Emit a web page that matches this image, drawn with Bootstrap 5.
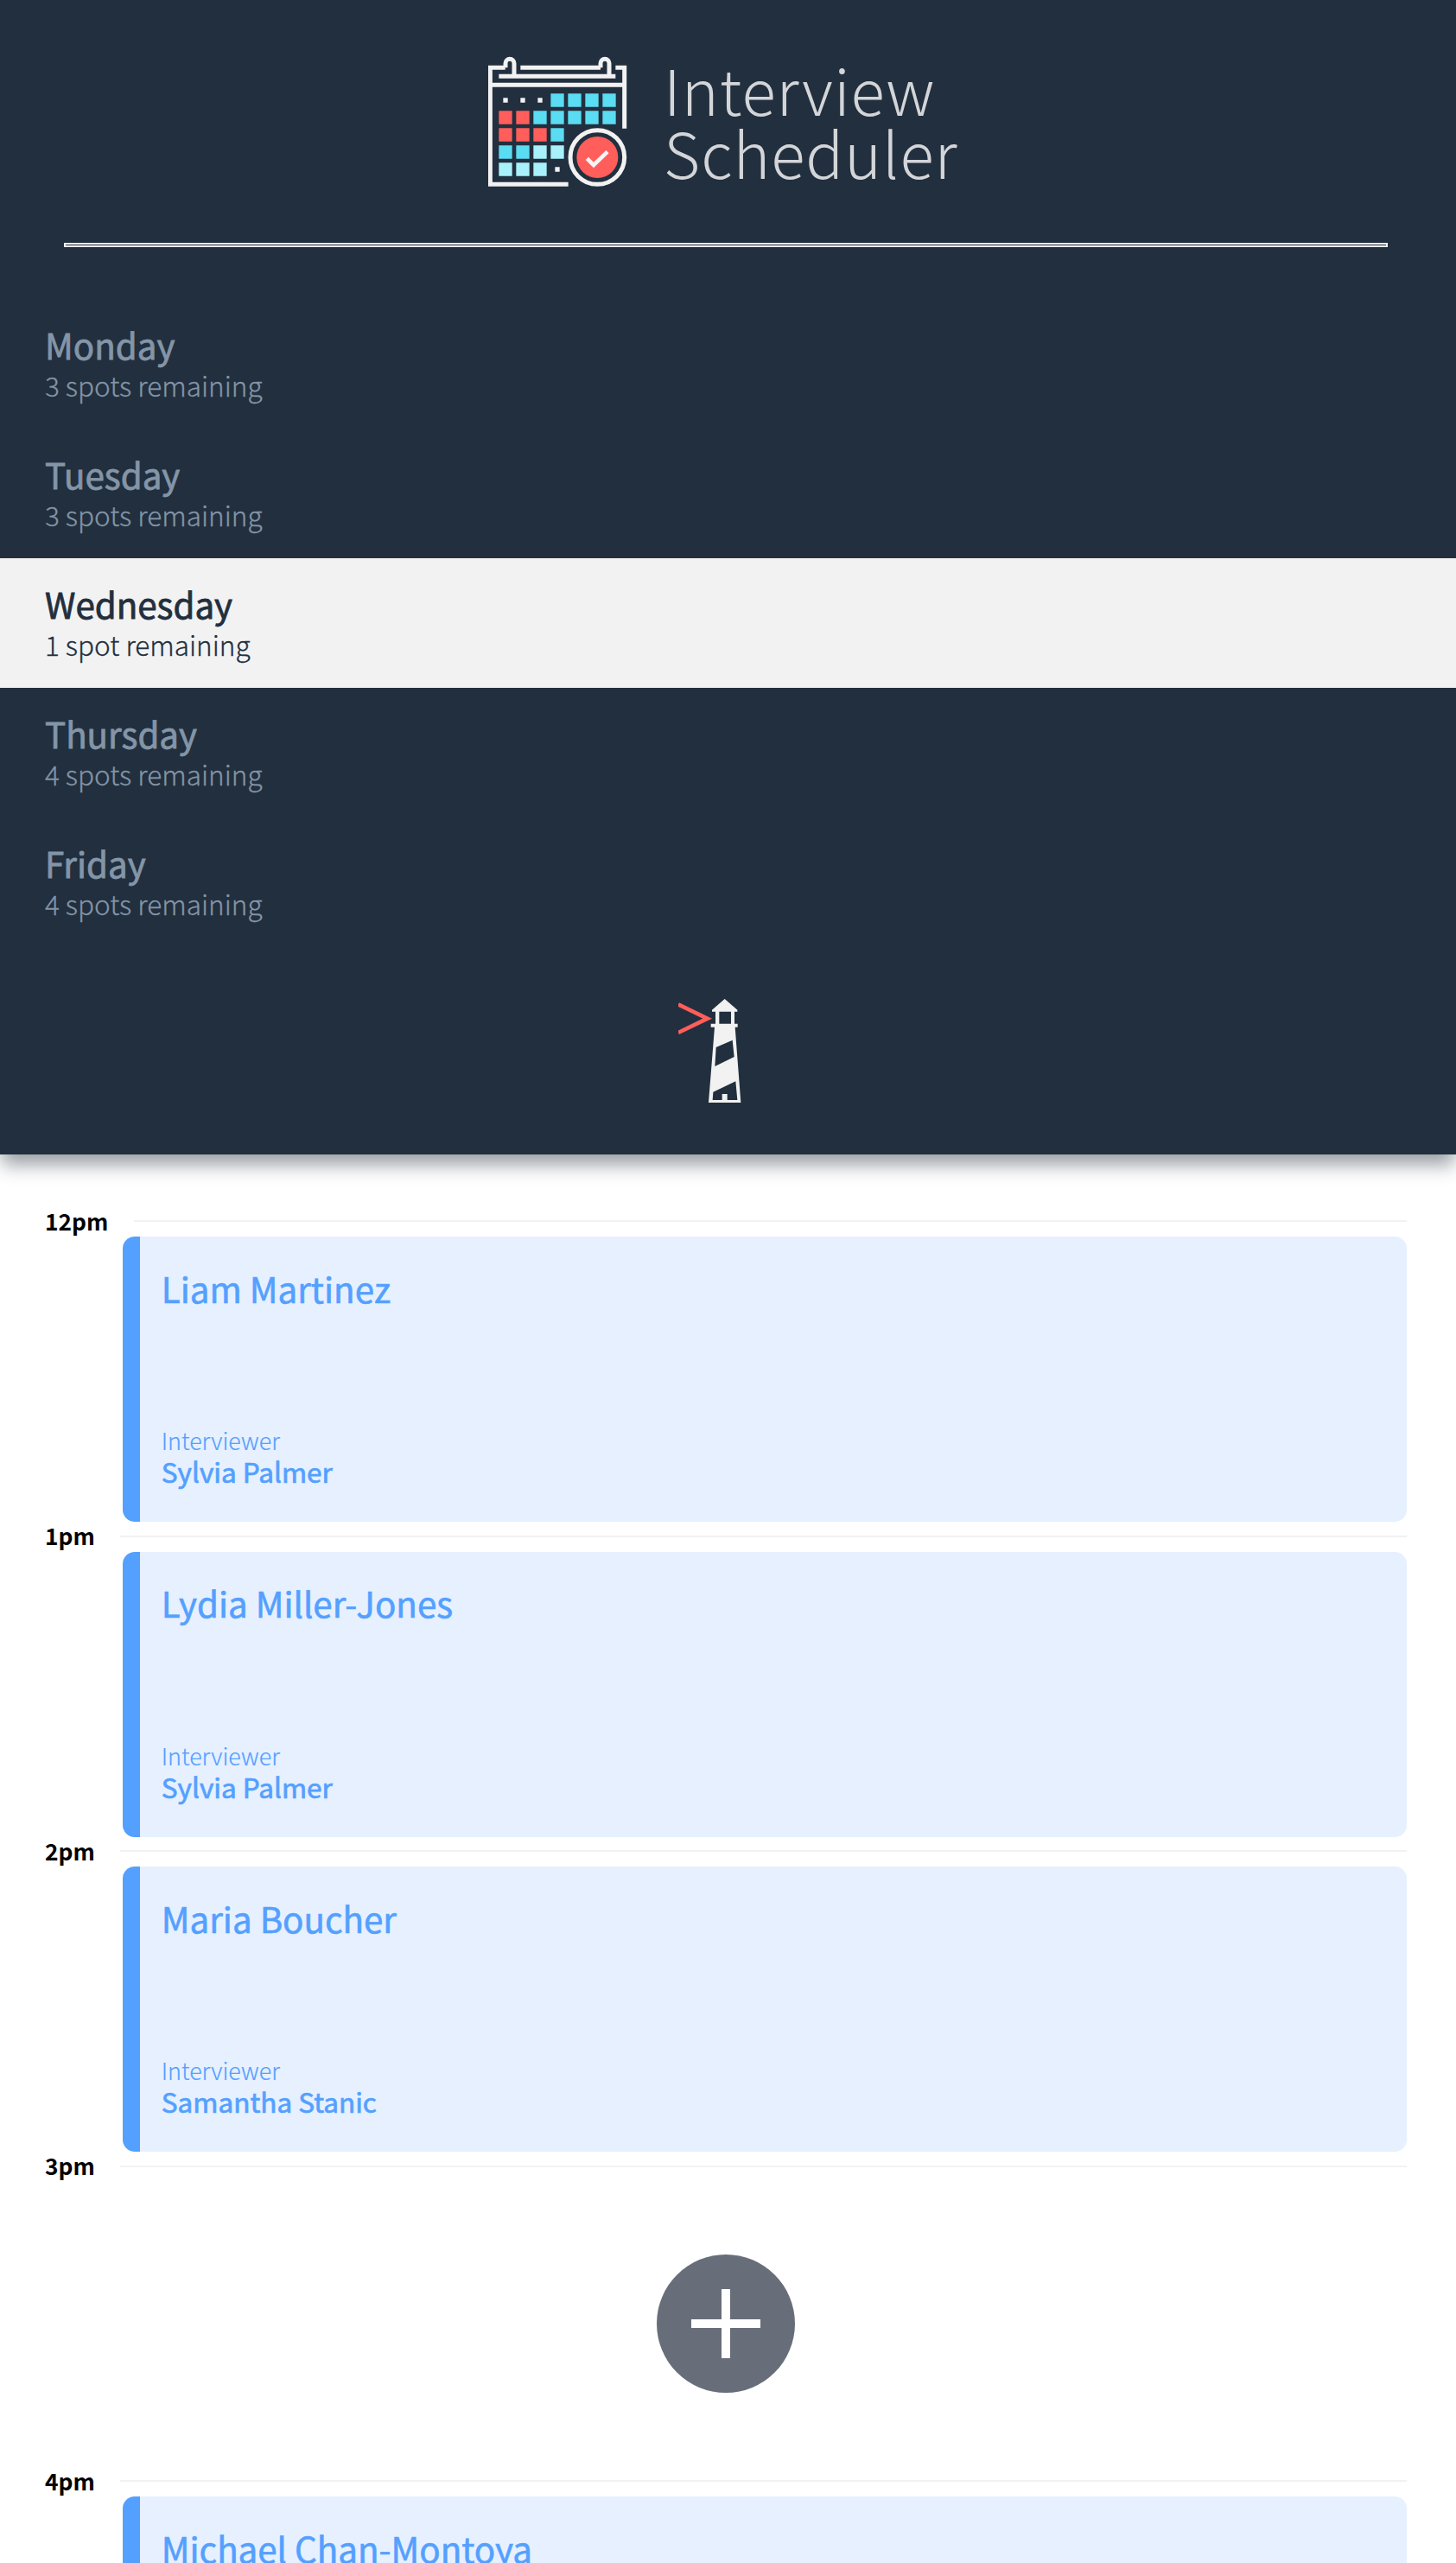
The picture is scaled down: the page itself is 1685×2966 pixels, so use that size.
<!DOCTYPE html>
<html lang="en">
<head>
<meta charset="utf-8">
<meta name="viewport" content="width=device-width, initial-scale=1">
<title>Interview Scheduler</title>
<link href="https://cdn.jsdelivr.net/npm/bootstrap@5.3.0/dist/css/bootstrap.min.css" rel="stylesheet">
<style>
body{font-family:"Noto Sans CJK SC","Open Sans",sans-serif;color:#000;background:#fff;height:2966px;overflow:hidden}
.side{background:#222f3e;height:1336px;box-shadow:0 14px 20px -2px rgba(34,47,62,.46)}
.brand{padding:65px 0 0 565px;gap:42px;height:281px}
.brand h1{font-size:72.7px;line-height:72.6px;font-weight:300;letter-spacing:1px;color:#d3d5d8;padding-top:2px}
.rule{height:5px;border:2px solid #f2f2f2;margin:0 79px 0 74px}
.days{margin-top:60px}
.day{height:150px;padding:27.5px 52px 0;color:#8395a7}
.day.picked{background:#f2f2f2;color:#222f3e}
.day h2,.who{font-size:40.3px;line-height:50px;font-weight:400;-webkit-text-stroke:.8px}
.spots{font-size:31.5px;line-height:43px;font-weight:300;-webkit-text-stroke:.3px}
.lhl{margin:60px 0 0 785px}
.schedule{padding-top:60.5px;height:1630px}
.hour{height:34.5px;padding:0 57px 0 52px;gap:29.5px}
.hour h4{font-size:26.3px;line-height:32px;font-weight:700}
.hour hr{height:2px;margin:15.5px 0 0;background:#f2f2f2;border:0;opacity:1}
.slot{height:330px;margin:0 57px 0 142px}
.booked{background:#e6f0ff;color:#54a0ff;border-left:20px solid #54a0ff;border-radius:14px;padding:34.5px 24.8px 40px}
.booked .who{-webkit-text-stroke:.6px}
.lbl{font-size:26.9px;line-height:33px;font-weight:300;-webkit-text-stroke:.2px}
.by{font-size:31.5px;line-height:38px;font-weight:400;-webkit-text-stroke:.7px}
.vacant{padding:84px 0 0 618px}
.last{height:77px;border-radius:14px 14px 0 0;padding-bottom:0}
</style>
</head>
<body>
<section class="side d-flex flex-column position-relative">
  <div class="brand d-flex align-items-start">
    <svg class="flex-shrink-0" width="161" height="152" viewBox="45 45 483 456">
      <g fill="none" stroke="#f2f2f2" stroke-width="15">
        <path d="M104 85H52V490H323M157 85H435M487 85H518V296M52 145H518M82 115H487M135 115V70a15 15 0 0 0-30 0V85M465 115V70a15 15 0 0 0-30 0V85"/>
        <circle cx="424" cy="396" r="94"/>
      </g>
      <path fill="#f2f2f2" d="M97 190h16v16H97zM157 190h16v16h-16zM217 190h16v16h-16zM277 430h16v16h-16z"/>
      <path fill="#5adcf2" d="M262 175h46v46h-46zM322 175h46v46h-46zM382 175h46v46h-46zM442 175h46v46h-46zM202 235h46v46h-46zM262 235h46v46h-46zM322 235h46v46h-46zM382 235h46v46h-46zM442 235h46v46h-46zM262 295h46v46h-46zM82 355h46v46H82zM142 355h46v46h-46z"/>
      <path fill="#ff5e5b" d="M82 235h46v46H82zM142 235h46v46h-46zM82 295h46v46H82zM142 295h46v46h-46zM202 295h46v46h-46z"/>
      <path fill="#a8f1fb" d="M202 355h46v46h-46zM262 355h46v46h-46zM82 415h46v46H82zM142 415h46v46h-46zM202 415h46v46h-46z"/>
      <circle cx="424" cy="396" r="72" fill="#ff5e5b"/>
      <path d="M388 400L411 423L459 377" fill="none" stroke="#f8f4f4" stroke-width="14"/>
    </svg>
    <h1 class="m-0">Interview<br>Scheduler</h1>
  </div>
  <div class="rule"></div>
  <nav class="days">
    <div class="day"><h2 class="m-0">Monday</h2><div class="spots">3 spots remaining</div></div>
    <div class="day"><h2 class="m-0">Tuesday</h2><div class="spots">3 spots remaining</div></div>
    <div class="day picked"><h2 class="m-0">Wednesday</h2><div class="spots">1 spot remaining</div></div>
    <div class="day"><h2 class="m-0">Thursday</h2><div class="spots">4 spots remaining</div></div>
    <div class="day"><h2 class="m-0">Friday</h2><div class="spots">4 spots remaining</div></div>
  </nav>
  <svg class="lhl" width="73" height="120" viewBox="135 78 219 360">
    <path d="M135 97L236 146L135 195" fill="none" stroke="#ff5e5b" stroke-width="14"/>
    <path fill="#f2f2f2" fill-rule="evenodd" d="M296 78L340 116V122H330V164H341V176H332L352 438H240L261 176H248V164H264V122H252V116ZM277 122V164H318V122ZM266 246L262 312L329 279L323 221ZM256 401L254 429H287V408H305V429H340L334 364Z"/>
  </svg>
</section>
<main class="schedule overflow-hidden">
  <div class="hour d-flex align-items-start"><h4 class="m-0">12pm</h4><hr class="flex-grow-1"></div>
  <div class="slot booked d-flex flex-column justify-content-between"><div class="who">Liam Martinez</div><div><div class="lbl">Interviewer</div><div class="by">Sylvia Palmer</div></div></div>
  <div class="hour d-flex align-items-start"><h4 class="m-0">1pm</h4><hr class="flex-grow-1"></div>
  <div class="slot booked d-flex flex-column justify-content-between"><div class="who">Lydia Miller-Jones</div><div><div class="lbl">Interviewer</div><div class="by">Sylvia Palmer</div></div></div>
  <div class="hour d-flex align-items-start"><h4 class="m-0">2pm</h4><hr class="flex-grow-1"></div>
  <div class="slot booked d-flex flex-column justify-content-between"><div class="who">Maria Boucher</div><div><div class="lbl">Interviewer</div><div class="by">Samantha Stanic</div></div></div>
  <div class="hour d-flex align-items-start"><h4 class="m-0">3pm</h4><hr class="flex-grow-1"></div>
  <div class="slot vacant">
    <svg class="d-block" width="160" height="160" viewBox="0 0 160 160"><circle cx="80" cy="80" r="80" fill="#676e79"/><path d="M40 80H120M80 40V120" stroke="#fff" stroke-width="10"/></svg>
  </div>
  <div class="hour d-flex align-items-start"><h4 class="m-0">4pm</h4><hr class="flex-grow-1"></div>
  <div class="slot booked last"><div class="who">Michael Chan-Montoya</div></div>
</main>
<script src="https://cdn.jsdelivr.net/npm/bootstrap@5.3.0/dist/js/bootstrap.bundle.min.js"></script>
</body>
</html>
